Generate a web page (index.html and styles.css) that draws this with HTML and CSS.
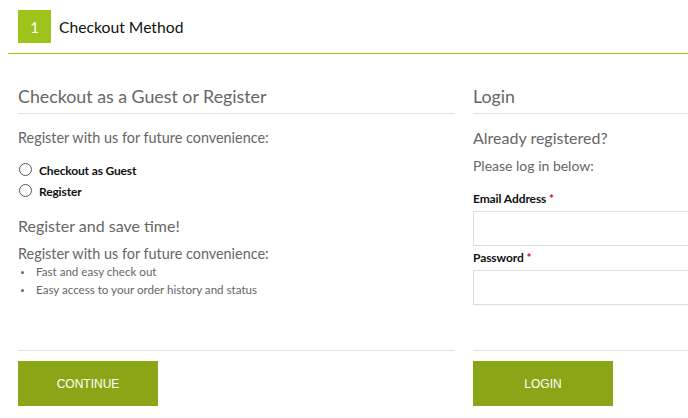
FILE: index.html
```html
<!DOCTYPE html>
<html>
<head>
<meta charset="utf-8">
<link rel="stylesheet" href="styles.css">
</head>
<body>
<div class="page">
  <div class="step-header">
    <span class="step-num">1</span>
    <span class="step-title">Checkout Method</span>
  </div>
  <div class="columns">
    <div class="col">
      <div class="col-body">
        <h2 class="col-title">Checkout as a Guest or Register</h2>
        <p class="lead">Register with us for future convenience:</p>
        <ul class="radios">
          <li><span class="radio"></span><span class="radio-label">Checkout as Guest</span></li>
          <li><span class="radio"></span><span class="radio-label">Register</span></li>
        </ul>
        <h3 class="sub">Register and save time!</h3>
        <p class="lead tight">Register with us for future convenience:</p>
        <ul class="bullets">
          <li>Fast and easy check out</li>
          <li>Easy access to your order history and status</li>
        </ul>
      </div>
      <div class="col-foot">
        <button class="btn">CONTINUE</button>
      </div>
    </div>
    <div class="col">
      <div class="col-body pad-bottom">
        <h2 class="col-title">Login</h2>
        <h3 class="sub2">Already registered?</h3>
        <p class="small-lead">Please log in below:</p>
        <label class="field-label first">Email Address <span class="req">*</span></label>
        <div class="input"></div>
        <label class="field-label">Password <span class="req">*</span></label>
        <div class="input"></div>
      </div>
      <div class="col-foot">
        <button class="btn">LOGIN</button>
      </div>
    </div>
  </div>
</div>
</body>
</html>
```
FILE: styles.css
```css
html, body {
  margin: 0;
  padding: 0;
  overflow: hidden;
  background: #fff;
}
body {
  font-family: Lato, "Open Sans", sans-serif;
  color: #666;
}
.page {
  width: 1000px;
}
.step-header {
  margin-left: 8px;
  padding: 10px 0 10px 10px;
  border-bottom: 1px solid #9fc40f;
  display: flex;
  align-items: center;
  gap: 8px;
}
.step-num {
  width: 33px;
  height: 33px;
  background: #9dc41a;
  color: #fff;
  font-size: 15px;
  display: flex;
  align-items: center;
  justify-content: center;
}
.step-title {
  font-size: 15.7px;
  color: #111;
}
.columns {
  display: flex;
  gap: 18px;
  padding-left: 18px;
  margin-top: 30px;
}
.col {
  width: 437px;
  display: flex;
  flex-direction: column;
}
.col-body.pad-bottom {
  padding-bottom: 45px;
}
.col-title {
  margin: 0;
  font-size: 17.8px;
  font-weight: normal;
  line-height: 24px;
  padding-bottom: 5px;
  border-bottom: 1px solid #e2e2e2;
  color: #666;
}
.lead {
  margin: 14px 0 0;
  font-size: 14.4px;
  line-height: 20px;
}
.lead.tight {
  margin-top: 8px;
  line-height: 18px;
}
.radios {
  list-style: none;
  margin: 12px 0 0;
  padding: 0;
}
.radios li {
  height: 21px;
  display: flex;
  align-items: center;
}
.radio {
  width: 11px;
  height: 11px;
  border: 1px solid #555;
  border-radius: 50%;
  margin-left: 1px;
  margin-right: 7px;
  margin-top: -2px;
}
.radio-label {
  font-size: 12px;
  font-weight: bold;
  color: #111;
  letter-spacing: -0.15px;
}
.sub {
  margin: 13px 0 0;
  font-size: 16px;
  font-weight: normal;
  line-height: 22px;
  color: #666;
}
.bullets {
  list-style: none;
  margin: 0;
  padding: 0;
}
.bullets li {
  position: relative;
  padding-left: 18px;
  font-size: 11.6px;
  line-height: 18px;
}
.bullets li::before {
  content: "";
  position: absolute;
  left: 3px;
  top: 8px;
  width: 3px;
  height: 3px;
  border-radius: 50%;
  background: #666;
}
.sub2 {
  margin: 14px 0 0;
  font-size: 16px;
  font-weight: normal;
  line-height: 20px;
  color: #666;
}
.small-lead {
  margin: 8px 0 0;
  font-size: 14px;
  line-height: 20px;
}
.field-label {
  display: block;
  margin-top: 4px;
  font-size: 12px;
  font-weight: bold;
  line-height: 16px;
  color: #111;
  letter-spacing: -0.1px;
}
.field-label.first {
  margin-top: 15px;
}
.req {
  color: #e0001b;
}
.input {
  margin-top: 4px;
  height: 33px;
  border: 1px solid #ddd;
  width: 100%;
}
.col-foot {
  margin-top: auto;
  border-top: 1px solid #e2e2e2;
  padding-top: 10px;
}
.btn {
  width: 140px;
  height: 45px;
  border: none;
  background: #8aa617;
  color: #fff;
  font-family: "Liberation Sans", Arial, sans-serif;
  font-size: 12px;
  padding: 0;
}
```
